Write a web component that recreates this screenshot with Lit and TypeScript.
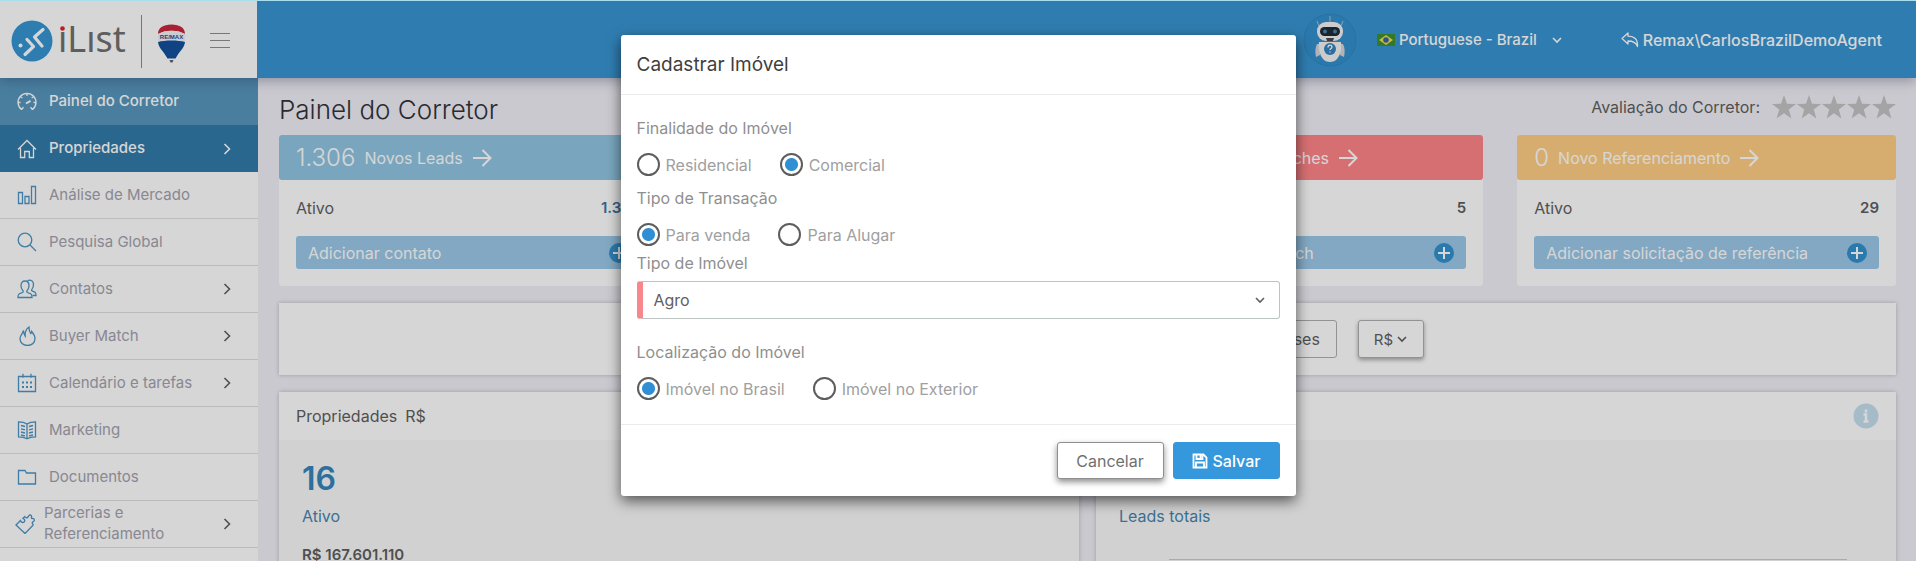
import { LitElement, html, css, svg, nothing, TemplateResult } from "lit";
import { customElement, state } from "lit/decorators.js";
import { classMap } from "lit/directives/class-map.js";

const glyphs: Record<string, TemplateResult> = {
  gauge: svg`<path d="M4.500 17.500A9 9 0 1 1 15.500 17.500M4.500 17.500l2-2.200M15.500 17.500l-2-2.200M1 10.500h2.500M16.500 10.500H19M10 1.500V4M3.600 4.400l1.700 1.700M16.400 4.400l-1.700 1.700"/><path d="M9 11.500l4.500-2.700" stroke-width="2"/>`,
  home: svg`<path d="M1 10.500L10 1.500l9 9M3.500 9v9.500h4.200v-6h4.600v6h4.200V9"/>`,
  bars: svg`<path d="M1.500 7.500h4v11h-4zM8 11.500h4v7H8zM14.500 1.500h4v17h-4z"/>`,
  search: svg`<circle cx="8" cy="8" r="6.800"/><path d="M13 13l6 6"/>`,
  people: svg`<path d="M1 18.500c0-4 1.500-4 4.600-5 .8-.3.800-1.400 0-2.200C4 9.600 4 8 4 6.500 4 3.500 5.600 2 8 2s4 1.500 4 4.500c0 1.500 0 3.100-1.600 4.800-.8.800-.8 1.900 0 2.200 3.100 1 4.600 1 4.600 5z"/><path d="M10.500 1.600c3.500-1.300 6 .6 6 4 0 1.500-.2 3-1.500 4.500-.7.700-.6 1.500.2 1.800 2.800 1 3.800 1.200 3.800 4.600h-3.500"/>`,
  fire: svg`<path d="M6.500 4.500c.2 2.500.6 4 1.700 5.500C8 6 9.500 2.500 12 1c-.2 3 .3 4.500 1.800 6.500.6-.5.900-1.200.9-2C16.800 8 18 10 18 12.500c0 4-3 7-7.500 7S3 16.500 3 12.500c0-3 2.800-5 3.500-8z"/>`,
  calendar: svg`<path d="M1.500 3.500h17v15h-17zM6 .800v4M14 .800v4"/><path d="M5 9.500h2M9 9.500h2M13 9.500h2M5 14h2M9 14h2M13 14h2" stroke-width="2"/>`,
  book: svg`<path d="M10 4C7.500 2.200 4.500 1.800 1.500 1.800v15c3 0 6 .4 8.500 2 2.500-1.600 5.500-2 8.500-2v-15c-3 0-6 .4-8.500 2.200zM10 4v14.500M4 5.500l4 1M4 8.800l4 1M4 12l4 1M16 5.500l-4 1M16 8.800l-4 1M16 12l-4 1M4 15l4 .800M16 15l-4 .800"/>`,
  folder: svg`<path d="M1.500 3.500h6.500l1.500 2.500h9v11h-17z"/>`,
  puzzle: svg`<path d="M1 11l4.500-4.500c.6 1.800 2.400 2.600 3.600 1.500S9.600 5 8 4.300L9.800 2.500c.8 1.500 2.600 1.700 3.300.4.500-.9.700-1.900 1.900-1.900 1.300 0 1.900 1.200 1.500 2.300-.3.900.1 1.400 1 1.200 1.200-.2 1.900.6 1.900 1.700 0 1-.9 1.400-1.700 1.800-.9.500-.4 1.500.3 2.200v1L10 19.500z"/>`,
};

const icon = (name: string) => html`
  <svg class="glyph" width="20" height="20" viewBox="0 0 20 20" fill="none" stroke="currentColor" stroke-width="1.300" aria-hidden="true">${glyphs[name]}</svg>`;

const chevron = (dir: "right" | "down") => html`
  <svg class="chev" width="12" height="12" viewBox="0 0 12 12" fill="none" stroke="currentColor" stroke-width="1.600" aria-hidden="true">
    <path d=${dir === "right" ? "M3.500 1l5 5-5 5" : "M2 4l4 4 4-4"}></path>
  </svg>`;

const arrow = html`
  <svg width="20" height="20" viewBox="0 0 20 20" fill="none" stroke="currentColor" stroke-width="2" aria-hidden="true"><path d="M1 10h17M10.500 2l8 8-8 8"></path></svg>`;

const plus = html`
  <svg width="20" height="20" viewBox="0 0 20 20" aria-hidden="true"><circle cx="10" cy="10" r="10" fill="#3492d0"></circle><path d="M10 4v12M4 10h12" stroke="#fff" stroke-width="2"></path></svg>`;

interface MenuItem { label: string; icon: string; sub?: boolean; tone?: string }
interface Card { total: string; label: string; tone: string; active: string; action: string; link?: boolean }

const MENU: MenuItem[] = [
  { label: "Painel do Corretor", icon: "gauge", tone: "current" },
  { label: "Propriedades", icon: "home", sub: true, tone: "hover" },
  { label: "Análise de Mercado", icon: "bars" },
  { label: "Pesquisa Global", icon: "search" },
  { label: "Contatos", icon: "people", sub: true },
  { label: "Buyer Match", icon: "fire", sub: true },
  { label: "Calendário e tarefas", icon: "calendar", sub: true },
  { label: "Marketing", icon: "book" },
  { label: "Documentos", icon: "folder" },
  { label: "Parcerias e Referenciamento", icon: "puzzle", sub: true, tone: "long" },
];

const CARDS: Card[] = [
  { total: "1.306", label: "Novos Leads", tone: "blue", active: "1.306", action: "Adicionar contato", link: true },
  { total: "0", label: "Novas Visitas", tone: "blue", active: "0", action: "Adicionar visita" },
  { total: "12", label: "Novos Buyers Matches", tone: "red", active: "5", action: "Adicionar Buyers Match" },
  { total: "0", label: "Novo Referenciamento", tone: "amber", active: "29", action: "Adicionar solicitação de referência" },
];

@customElement("brand-logo")
class BrandLogo extends LitElement {
  static styles = css`
    :host { display: block; height: 60px; }
    .word { font: 36px "Noto Sans", sans-serif; fill: #72706f; }
    .mark { font: 700 6px "Liberation Sans", sans-serif; fill: #2b4c8c; }
  `;
  render() {
    return html`
      <svg width="180" height="60" viewBox="0 0 180 60" role="img" aria-label="iList RE/MAX">
        <circle cx="22" cy="31" r="20.500" fill="#3795d3"></circle>
        <g fill="none" stroke="#fff" stroke-width="3.200" stroke-linecap="round" stroke-linejoin="round">
          <path d="M17 29.500l6.500 7-8.500 8"></path><path d="M33 19.500l-8.500 7.500 7.500 9"></path>
        </g>
        <circle cx="10.500" cy="35.500" r="2" fill="#fff"></circle>
        <text class="word" x="48" y="42">iLıst</text>
        <circle cx="52.500" cy="18" r="4" fill="#fff"></circle>
        <circle cx="52.500" cy="18.500" r="2.300" fill="#d8232f"></circle>
        <path d="M131.500 5v53" stroke="#8c8c8c"></path>
        <path d="M148 24c0-6 5-9.500 13.500-9.500S175 18 175 24c-7-4.500-20-4.500-27 0z" fill="#c9283c"></path>
        <path d="M148 24c7-4.500 20-4.500 27 0v7c-7 2.500-20 2.500-27 0z" fill="#f2f4f8"></path>
        <path d="M148 32c7-2 20-2 27 0-.5 6-5.500 9-9.500 16.500h-8C153.500 41 148.500 38 148 32z" fill="#13509c"></path>
        <path d="M159.500 50h4l-1 2.500h-2z" fill="#666"></path>
        <text class="mark" x="161.500" y="29" text-anchor="middle">RE/MAX</text>
      </svg>`;
  }
}

@customElement("lead-card")
class LeadCard extends LitElement {
  static properties = { card: { attribute: false } };
  declare card: Card;
  static styles = css`
    :host { display: block; background: #fff; border-radius: 3px; }
    .head { display: flex; align-items: center; height: 45px; padding: 0 17px; gap: 9px; color: #fff; border-radius: 3px; }
    .blue { background: #91c6e3; }
    .red { background: #ff8588; }
    .amber { background: #ffcf84; }
    .total { font-size: 24px; font-weight: 300; }
    .body { padding: 17px; display: grid; gap: 17px; }
    .line { display: flex; justify-content: space-between; line-height: 22px; color: #5f5f5f; }
    .value { font-size: 15px; font-weight: 600; }
    .link { color: #42739d; }
    .add { display: flex; justify-content: space-between; align-items: center; width: 100%; height: 33px; padding: 0 12px; border: 0; border-radius: 3px; background: #9bc9e9; color: #fff; font: inherit; white-space: nowrap; }
  `;
  render() {
    const c = this.card;
    return html`
      <div class="head ${c.tone}"><span class="total">${c.total}</span><span>${c.label}</span>${arrow}</div>
      <div class="body">
        <div class="line"><span>Ativo</span><span class=${classMap({ value: true, link: !!c.link })}>${c.active}</span></div>
        <button class="add" type="button"><span>${c.action}</span>${plus}</button>
      </div>`;
  }
}

@customElement("property-dialog")
class PropertyDialog extends LitElement {
  @state() private picks: Record<string, string> = { goal: "Comercial", deal: "Para venda", place: "Imóvel no Brasil" };

  static styles = css`
    :host { display: block; }
    .dialog { background: #fff; border-radius: 3px; box-shadow: 0 5px 14px rgba(0, 0, 0, 0.6); color: #8f8f8f; }
    .head { padding: 0 16px; line-height: 59px; border-bottom: 1px solid #ebebeb; }
    h2 { margin: 0; font-size: 19px; font-weight: 400; color: #3f3f3f; }
    .body { padding: 20px 16px 15px; }
    fieldset { margin: 0; padding: 0; border: 0; min-width: 0; }
    legend, .caption { display: block; padding: 0; line-height: 26px; }
    .options { display: flex; gap: 28px; padding: 11px 0 8px; }
    .deal .options { padding-bottom: 3px; }
    .option { display: flex; align-items: center; gap: 6px; height: 25px; color: #a0a0a0; }
    .option input { appearance: none; box-sizing: border-box; width: 23px; height: 23px; margin: 0; border: 2px solid #5d5d5d; border-radius: 50%; }
    .option input:checked { background: radial-gradient(circle, #2f8fd2 6px, #fff 7px); }
    .picker { position: relative; color: #606060; margin: 5px 0 20px; }
    .picker select { appearance: none; display: block; box-sizing: border-box; width: 100%; height: 38px; padding: 0 11px; border: 1px solid #bdc3c1; border-left: 6px solid #f8868d; border-radius: 3px; background: #fff; color: inherit; font: inherit; }
    .picker .chev { position: absolute; right: 14px; top: 13px; pointer-events: none; }
    .foot { display: flex; justify-content: flex-end; gap: 9px; padding: 17px 16px; border-top: 1px solid #ebebeb; }
    .btn { display: flex; align-items: center; justify-content: center; gap: 5px; box-sizing: border-box; width: 107px; height: 37px; padding: 0; border: 1px solid #8f8f8f; border-radius: 3px; background: #fff; color: #707070; font: inherit; box-shadow: 0 3px 6px rgba(0, 0, 0, 0.45); }
    .primary { border-color: #3598dc; background: #3598dc; color: #fff; font-weight: 500; box-shadow: none; }
  `;

  private group(key: string, title: string, options: string[]) {
    return html`
      <fieldset class=${key}>
        <legend>${title}</legend>
        <div class="options">
          ${options.map((o) => html`
            <label class="option">
              <input type="radio" name=${key} .checked=${this.picks[key] === o}
                @change=${() => (this.picks = { ...this.picks, [key]: o })}>
              <span>${o}</span>
            </label>`)}
        </div>
      </fieldset>`;
  }

  render() {
    return html`
      <form class="dialog" role="dialog" aria-labelledby="title" @submit=${(e: Event) => e.preventDefault()}>
        <header class="head"><h2 id="title">Cadastrar Imóvel</h2></header>
        <div class="body">
          ${this.group("goal", "Finalidade do Imóvel", ["Residencial", "Comercial"])}
          ${this.group("deal", "Tipo de Transação", ["Para venda", "Para Alugar"])}
          <label class="caption" for="kind">Tipo de Imóvel</label>
          <div class="picker">
            <select id="kind"><option>Agro</option></select>
            ${chevron("down")}
          </div>
          ${this.group("place", "Localização do Imóvel", ["Imóvel no Brasil", "Imóvel no Exterior"])}
        </div>
        <footer class="foot">
          <button class="btn" type="button">Cancelar</button>
          <button class="btn primary" type="submit">
            <svg width="16" height="16" viewBox="0 0 16 16" fill="none" stroke="currentColor" stroke-width="1.800" aria-hidden="true"><path d="M1.500 1.500h10l3 3v10h-13zM4.500 1.500v4.500h6v-4.500M4 14.500v-5h8v5M8.500 2v3"></path></svg>
            Salvar
          </button>
        </footer>
      </form>`;
  }
}

@customElement("app-root")
class AppRoot extends LitElement {
  static styles = css`
    :host { display: block; position: relative; height: 100vh; overflow: hidden; box-sizing: border-box; border-top: 1px solid #a9deed; background: #f1f0f7; color: #5f5f5f; font-family: Inter, sans-serif; font-size: 16px; }
    a { color: inherit; text-decoration: none; }
    .topbar { position: relative; display: flex; height: 77px; background: #3895d2; box-shadow: 0 2px 12px rgba(40, 50, 90, 0.4); }
    .brand { display: flex; align-items: center; justify-content: space-between; box-sizing: border-box; width: 257px; padding: 0 27px 0 10px; background: #fff; }
    .toggle { padding: 0; border: 0; background: none; display: flex; color: #8f8f8f; }
    .session { display: flex; align-items: center; flex: 1; justify-content: flex-end; padding-right: 34px; color: #fff; font-weight: 500; }
    .bot { display: flex; margin-right: 20px; }
    .lang { display: flex; align-items: center; gap: 4px; margin-right: 58px; font-size: 15px; }
    .lang .chev { margin-left: 10px; }
    .user { display: flex; align-items: center; gap: 4px; }
    .layout { display: flex; }
    .side { width: 258px; flex: none; background: #fff; font-size: 15px; }
    .side ul { list-style: none; margin: 0; padding: 0; }
    .item { display: flex; align-items: center; box-sizing: border-box; height: 47px; padding: 0 25px 0 17px; gap: 12px; color: #a3a2af; border-bottom: 1px solid #dfdfe3; line-height: 21px; }
    .item .glyph { flex: none; color: #4c95c6; }
    .item .label { flex: 1; padding-bottom: 2px; }
    .item .chev { color: #5f5f66; }
    .item.current, .item.hover { border: 0; color: #fff; font-weight: 500; }
    .item.current { background: #5897bd; }
    .item.hover { background: #327baa; }
    .item.current .glyph, .item.hover .glyph, .item.hover .chev { color: #fff; }
    .item.long { padding-left: 15px; gap: 9px; }
    .main { flex: 1; min-width: 0; padding: 0 20px 0 21px; }
    .title { display: flex; align-items: center; justify-content: space-between; height: 57px; }
    h1 { margin: 0; padding-top: 6px; font-size: 26px; font-weight: 300; color: #33333b; line-height: 51px; }
    .rating { display: flex; align-items: center; gap: 12px; }
    .cards { display: grid; grid-template-columns: repeat(4, 1fr); gap: 34px; }
    .filters { display: flex; justify-content: center; align-items: center; gap: 21px; height: 72px; margin: 17px 0; background: #fff; box-shadow: 0 0 4px rgba(60, 60, 80, 0.3); }
    .period { display: flex; justify-content: flex-end; width: 586px; }
    .choice { height: 38px; padding: 0 16px; border: 1px solid #b0b0b0; border-radius: 3px; background: #fff; color: inherit; font: inherit; }
    .money { display: flex; align-items: center; gap: 3px; padding: 0 15px; font-size: 15px; box-shadow: 0 2px 4px rgba(0, 0, 0, 0.35); }
    .panels { display: grid; grid-template-columns: 1fr 1fr; gap: 17px; }
    .panel { background: #fafafa; border-radius: 3px; box-shadow: 0 0 4px rgba(60, 60, 80, 0.3); }
    .phead { display: flex; align-items: center; justify-content: space-between; height: 48px; padding: 0 17px; background: #fff; }
    .phead .unit { margin-left: 8px; }
    .pbody { padding: 17px 23px; color: #4486b0; }
    .count { font-size: 32px; font-weight: 600; line-height: 44px; color: #3685bc; }
    .kind { line-height: 30px; }
    .sum { line-height: 22px; padding-top: 13px; font-size: 15px; font-weight: 600; color: #5f5f5f; }
    .plot { margin: 28px 26px 0 50px; height: 120px; border-top: 1px solid #ccc; }
    .scrim { position: absolute; inset: -1px 0 0; display: flex; justify-content: center; align-items: flex-start; padding-top: 35px; background: rgba(0, 0, 0, 0.16); }
    .scrim property-dialog { width: 675px; max-width: 100%; }
  `;

  private item(m: MenuItem) {
    return html`<li><a class="item ${m.tone ?? ""}" href="#">${icon(m.icon)}<span class="label">${m.label}</span>${m.sub ? chevron("right") : nothing}</a></li>`;
  }

  render() {
    return html`
      <header class="topbar">
        <div class="brand">
          <brand-logo></brand-logo>
          <button class="toggle" type="button" aria-label="Menu">
            <svg width="20" height="16" viewBox="0 0 20 16" stroke="currentColor"><path d="M0 1.500h20M0 8.500h20M0 15.500h20"></path></svg>
          </button>
        </div>
        <div class="session">
          <a class="bot" href="#" aria-label="Ajuda">
            <svg width="54" height="54" viewBox="0 0 54 54">
              <circle cx="27" cy="27" r="26" fill="#3490cd" stroke="#3088c4"></circle>
              <path d="M27 3v7M14 8l2 5M40 8l-2 5" stroke="#a7c4d8"></path>
              <path d="M14 31c-2 4-2 8-1 13l4-2V31zM40 31c2 4 2 8 1 13l-4-2V31z" fill="#d3d6dc"></path>
              <path d="M16 29h22c1 9-2 20-11 20S15 38 16 29z" fill="#f3f3f5"></path>
              <rect x="14" y="9" width="26" height="19" rx="9" fill="#f3f3f5"></rect>
              <rect x="17" y="14" width="20" height="9" rx="4.500" fill="#1e2b38"></rect>
              <circle cx="22" cy="18.500" r="2" fill="#4a86a8"></circle><circle cx="32" cy="18.500" r="2" fill="#4a86a8"></circle>
              <path d="M23 25h8l-1 3h-6z" fill="#4a4a50"></path>
              <circle cx="27" cy="36" r="6" fill="#3585bd"></circle>
              <path d="M25 34.500c0-3 4-3 4-.500 0 1.500-2 1.500-2 3M27 38.500v1" fill="none" stroke="#fff" stroke-width="1.300"></path>
            </svg>
          </a>
          <a class="lang" href="#">
            <svg width="18" height="12" viewBox="0 0 18 12" aria-hidden="true"><path d="M0 0h18v12H0z" fill="#3d8f2d"></path><path d="M9 1l7 5-7 5-7-5z" fill="#e8e04a"></path><circle cx="9" cy="6" r="2.800" fill="#3d62a8"></circle></svg>
            <span>Portuguese - Brazil</span>${chevron("down")}
          </a>
          <a class="user" href="#">
            <svg width="18" height="16" viewBox="0 0 18 16" fill="none" stroke="currentColor" stroke-width="1.300" stroke-linejoin="round" aria-hidden="true"><path d="M1 6.500L7 1v3.200c6 0 10 2.800 9.500 10.300C15 10.500 12 9 7 9v3z"></path></svg>
            <span>Remax\\CarlosBrazilDemoAgent</span>
          </a>
        </div>
      </header>
      <div class="layout">
        <nav class="side"><ul>${MENU.map((m) => this.item(m))}</ul></nav>
        <main class="main">
          <div class="title">
            <h1>Painel do Corretor</h1>
            <div class="rating">
              <span>Avaliação do Corretor:</span>
              <svg width="124" height="24" viewBox="0 0 124 24" fill="#c4c4c4" role="img" aria-label="0 de 5">
                ${[0, 1, 2, 3, 4].map((i) => svg`<path transform="translate(${i * 25} 0)" d="M12 0l3 8.800 9 .100-7.200 5.600 2.600 9.100L12 18.200l-7.400 5.400 2.600-9.100L0 8.900l9-.100z"/>`)}
              </svg>
            </div>
          </div>
          <section class="cards">${CARDS.map((c) => html`<lead-card .card=${c}></lead-card>`)}</section>
          <section class="filters">
            <div class="period"><button class="choice" type="button">Últimos 12 meses</button></div>
            <button class="choice money" type="button">R$ ${chevron("down")}</button>
          </section>
          <section class="panels">
            <article class="panel">
              <header class="phead"><span>Propriedades<span class="unit">R$</span></span></header>
              <div class="pbody">
                <div class="count">16</div><div class="kind">Ativo</div><div class="sum">R$ 167.601.110</div>
              </div>
            </article>
            <article class="panel">
              <header class="phead"><span>Leads</span>
                <svg width="26" height="26" viewBox="0 0 26 26" role="img" aria-label="Informações"><circle cx="13" cy="13" r="12.500" fill="#c5dfee"></circle><path d="M13 6.500v3M10.500 11.500H13V18M10.500 18.500h5" stroke="#fff" stroke-width="2.600" fill="none"></path></svg>
              </header>
              <div class="pbody">
                <div class="count">1.306</div><div class="kind">Leads totais</div><div class="plot"></div>
              </div>
            </article>
          </section>
        </main>
      </div>
      <div class="scrim"><property-dialog></property-dialog></div>`;
  }
}
